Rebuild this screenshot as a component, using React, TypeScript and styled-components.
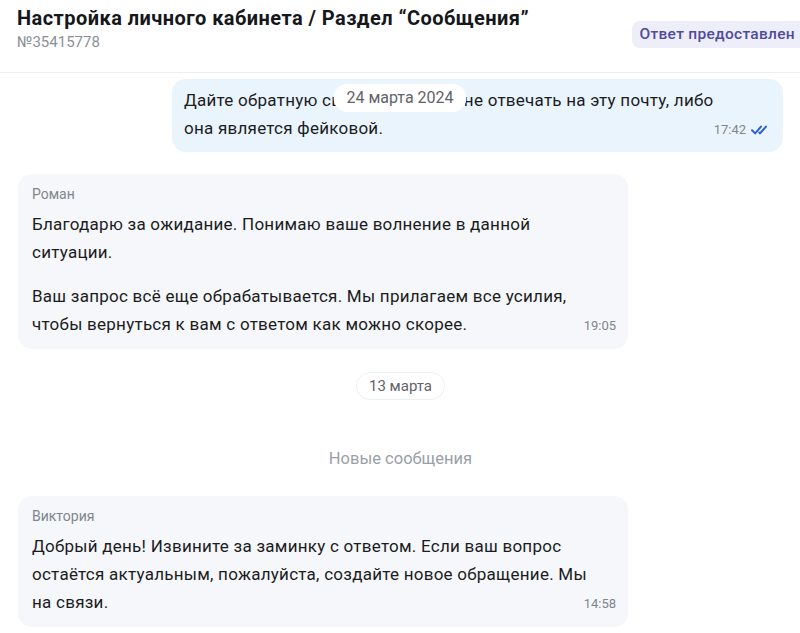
import styled, { createGlobalStyle } from "styled-components";

const GlobalStyle = createGlobalStyle`
  html, body {
    margin: 0;
    padding: 0;
    background: #ffffff;
    font-family: Roboto, "Noto Sans", Arial, sans-serif;
    color: #1b1c1e;
    overflow: hidden;
  }
`;

const Page = styled.div`
  width: 800px;
  height: 633px;
  overflow: hidden;
`;

const Header = styled.header`
  display: flex;
  justify-content: space-between;
  align-items: flex-start;
  height: 73px;
  box-sizing: border-box;
  padding: 6px 0 0 17px;
  border-bottom: 1px solid #eceef1;
`;

const TitleBlock = styled.div`
  display: flex;
  flex-direction: column;
`;

const Title = styled.h1`
  margin: 0;
  font-size: 20px;
  line-height: 24px;
  font-weight: 700;
  letter-spacing: 0.45px;
  color: #16171a;
`;

const TicketNumber = styled.span`
  font-size: 15px;
  line-height: 24px;
  color: #8a8f96;
`;

const Badge = styled.span`
  margin-top: 15px;
  padding: 0 5px 0 8px;
  height: 27px;
  line-height: 27px;
  border-radius: 8px 0 0 8px;
  background: #eeeefb;
  color: #4f4b9a;
  font-size: 15.5px;
  font-weight: 500;
  letter-spacing: 0.3px;
  white-space: nowrap;
`;

const Chat = styled.main`
  position: relative;
  display: flex;
  flex-direction: column;
  padding: 6px 17px 0 18px;
`;

const DatePill = styled.div<{ $bordered?: boolean; $size: number }>`
  align-self: center;
  padding: 0 12px;
  height: 26px;
  line-height: 26px;
  border-radius: 14px;
  background: #ffffff;
  border: 1px solid ${p => (p.$bordered ? "#edf0f3" : "transparent")};
  color: #5f636a;
  font-size: ${p => p.$size}px;
  white-space: nowrap;
`;

const StickyDate = styled(DatePill)`
  position: absolute;
  top: 11px;
  left: 50%;
  transform: translateX(-50%);
`;

const Bubble = styled.div<{ $own?: boolean }>`
  box-sizing: border-box;
  width: ${p => (p.$own ? "611px" : "610px")};
  align-self: ${p => (p.$own ? "flex-end" : "flex-start")};
  background: ${p => (p.$own ? "#eaf4fd" : "#f5f7fa")};
  border-radius: 14px;
  padding: ${p => (p.$own ? "7px 15px 10px 12px" : "10px 12px 11px 14px")};
`;

const Body = styled.div<{ $gutter: number }>`
  padding-right: ${p => p.$gutter}px;
`;

const Author = styled.div`
  font-size: 14px;
  line-height: 20px;
  color: #80868e;
  margin-bottom: 6px;
`;

const Paragraph = styled.p`
  margin: 0;
  font-size: 17px;
  line-height: 28px;
  letter-spacing: 0.25px;
  & + & {
    margin-top: 16px;
  }
`;

const Meta = styled.span<{ $gutter: number }>`
  float: right;
  display: inline-flex;
  align-items: center;
  gap: 5px;
  margin-top: 4px;
  margin-right: -${p => p.$gutter}px;
  font-size: 13px;
  line-height: 24px;
  letter-spacing: 0;
  color: #80868d;
`;

const Separator = styled.div`
  align-self: center;
  margin: 48px 0 26px;
  font-size: 16.5px;
  line-height: 22px;
  color: #9aa0a7;
`;

const Spacer = styled.div<{ $h: number }>`
  height: ${p => p.$h}px;
  flex-shrink: 0;
`;

function DoubleCheck() {
  return (
    <svg width="17" height="10" viewBox="0 0 17 10" fill="none">
      <path d="M1 5.2 L4.2 8.4 L10 1.6" stroke="#2d5fd3" strokeWidth="2" strokeLinecap="round" strokeLinejoin="round" />
      <path d="M8.2 7.6 L9 8.4 L15 1.6" stroke="#2d5fd3" strokeWidth="2" strokeLinecap="round" strokeLinejoin="round" />
    </svg>
  );
}

type Message = {
  own?: boolean;
  author?: string;
  paragraphs: string[];
  time: string;
};

const messages: Message[] = [
  {
    own: true,
    paragraphs: ["Дайте обратную связь, будут ли мне отвечать на эту почту, либо она является фейковой."],
    time: "17:42",
  },
  {
    author: "Роман",
    paragraphs: [
      "Благодарю за ожидание. Понимаю ваше волнение в данной ситуации.",
      "Ваш запрос всё еще обрабатывается. Мы прилагаем все усилия, чтобы вернуться к вам с ответом как можно скорее.",
    ],
    time: "19:05",
  },
  {
    author: "Виктория",
    paragraphs: [
      "Добрый день! Извините за заминку с ответом. Если ваш вопрос остаётся актуальным, пожалуйста, создайте новое обращение. Мы на связи.",
    ],
    time: "14:58",
  },
];

function MessageBubble({ own, author, paragraphs, time }: Message) {
  const gutter = own ? 42 : 26;
  return (
    <Bubble $own={own}>
      {author && <Author>{author}</Author>}
      <Body $gutter={gutter}>
        {paragraphs.map((text, i) => (
          <Paragraph key={i}>
            {text}
            {i === paragraphs.length - 1 && (
              <Meta $gutter={gutter}>
                {time}
                {own && <DoubleCheck />}
              </Meta>
            )}
          </Paragraph>
        ))}
      </Body>
    </Bubble>
  );
}

export default function App() {
  const [mine, roman, viktoria] = messages;
  return (
    <Page>
      <GlobalStyle />
      <Header>
        <TitleBlock>
          <Title>Настройка личного кабинета / Раздел “Сообщения”</Title>
          <TicketNumber>№35415778</TicketNumber>
        </TitleBlock>
        <Badge>Ответ предоставлен</Badge>
      </Header>
      <Chat>
        <StickyDate $size={16}>24 марта 2024</StickyDate>
        <MessageBubble {...mine} />
        <Spacer $h={22} />
        <MessageBubble {...roman} />
        <Spacer $h={23} />
        <DatePill $bordered $size={15}>13 марта</DatePill>
        <Separator>Новые сообщения</Separator>
        <MessageBubble {...viktoria} />
      </Chat>
    </Page>
  );
}
